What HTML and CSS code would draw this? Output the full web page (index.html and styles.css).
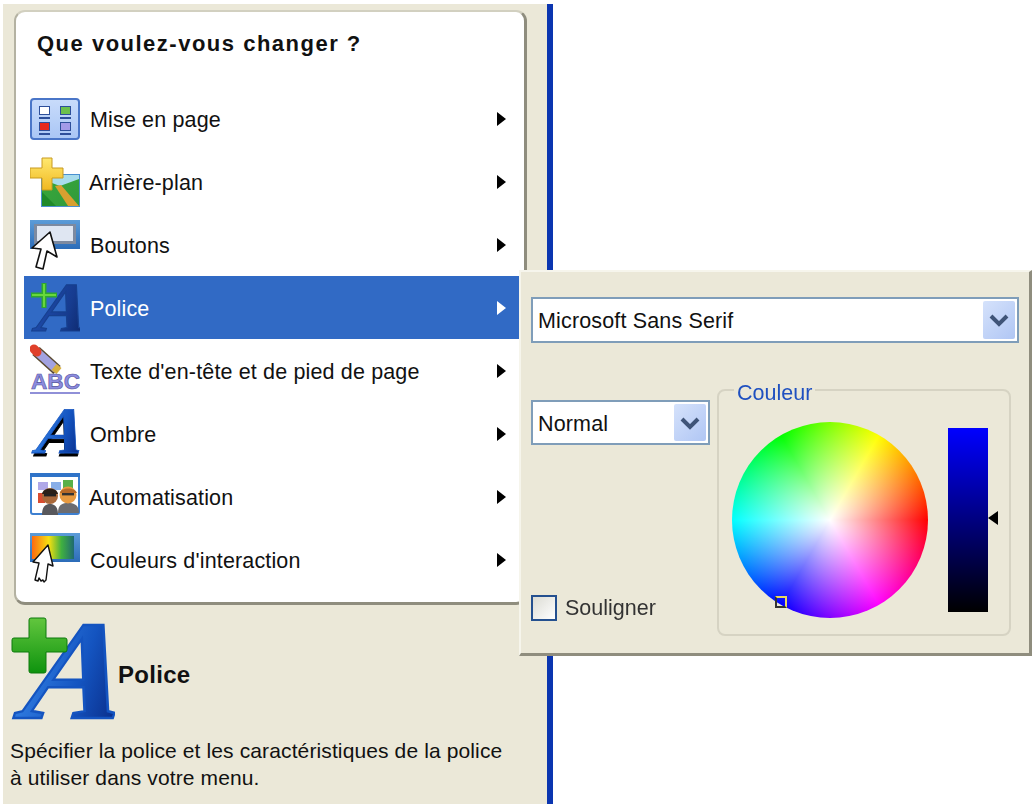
FILE: index.html
```html
<!DOCTYPE html>
<html lang="fr">
<head>
<meta charset="utf-8">
<title>Que voulez-vous changer ?</title>
<link rel="stylesheet" href="styles.css">
</head>
<body>
<svg class="defs" width="0" height="0" aria-hidden="true">
  <defs>
    <linearGradient id="aBlue" x1="0" y1="0" x2="1" y2="0">
      <stop offset="0" stop-color="#2f7be0"/><stop offset=".55" stop-color="#1454c0"/><stop offset="1" stop-color="#0a2f8c"/>
    </linearGradient>
    <linearGradient id="aDark" x1="0" y1="0" x2="1" y2="0">
      <stop offset="0" stop-color="#1d4aa8"/><stop offset=".6" stop-color="#173c90"/><stop offset="1" stop-color="#0e2a70"/>
    </linearGradient>
    <linearGradient id="plusGreen" x1="0" y1="0" x2="0" y2="1">
      <stop offset="0" stop-color="#62c63e"/><stop offset="1" stop-color="#0e930e"/>
    </linearGradient>
    <linearGradient id="plusYellow" x1="0" y1="0" x2="0" y2="1">
      <stop offset="0" stop-color="#ffe870"/><stop offset="1" stop-color="#f0b820"/>
    </linearGradient>
    <linearGradient id="sky" x1="0" y1="0" x2="1" y2="0">
      <stop offset="0" stop-color="#ff6a10"/><stop offset=".4" stop-color="#f6e010"/><stop offset=".7" stop-color="#40b040"/><stop offset="1" stop-color="#1f6a70"/>
    </linearGradient>
    <linearGradient id="panelBlue" x1="0" y1="0" x2="0" y2="1">
      <stop offset="0" stop-color="#c9dcfb"/><stop offset="1" stop-color="#a9c6f5"/>
    </linearGradient>
    <linearGradient id="btnBlue" x1="0" y1="0" x2="0" y2="1">
      <stop offset="0" stop-color="#5c9cd8"/><stop offset="1" stop-color="#2c6cb8"/>
    </linearGradient>
    <linearGradient id="land" x1="0" y1="0" x2="1" y2="1">
      <stop offset="0" stop-color="#3aa83a"/><stop offset="1" stop-color="#2f9a3c"/>
    </linearGradient>
  </defs>
</svg>
<div class="page">
  <div class="panel">
    <section class="card">
      <h1 class="card-title">Que voulez-vous changer ?</h1>
      <ul class="menu">
        <li class="item">
          <svg class="icon" viewBox="0 0 50 63">
            <rect x="1" y="12" width="48" height="40" rx="3" fill="url(#panelBlue)" stroke="#4a76c8" stroke-width="2"/>
            <rect x="9.5" y="19.5" width="10" height="8" fill="#fff" stroke="#2d4f9a"/>
            <rect x="30.5" y="19.5" width="10" height="8" fill="#6cc04c" stroke="#2d4f9a"/>
            <rect x="9" y="30" width="11" height="2" fill="#2d4f9a"/>
            <rect x="30" y="30" width="11" height="2" fill="#2d4f9a"/>
            <rect x="9.5" y="35.5" width="10" height="8" fill="#e8281c" stroke="#2d4f9a"/>
            <rect x="30.5" y="35.5" width="10" height="8" fill="#a39ae8" stroke="#2d4f9a"/>
            <rect x="9" y="46" width="11" height="2" fill="#2d4f9a"/>
            <rect x="30" y="46" width="11" height="2" fill="#2d4f9a"/>
          </svg>
          <span class="label">Mise en page</span><i class="caret"></i>
        </li>
        <li class="item">
          <svg class="icon" viewBox="0 0 50 63">
            <rect x="11.5" y="24.5" width="38" height="32" fill="url(#land)" stroke="#4a90d0"/>
            <path d="M22 25h27v4L30 36l-8-3z" fill="#a8dcec"/>
            <path d="M25 36l6-1 18 21H38z" fill="#d8a030"/>
            <path d="M12 42l14 14H12z" fill="#1f8a2a"/>
            <path d="M12 8h10v10h11v10H22v12H12V28H0V18h12z" fill="url(#plusYellow)" stroke="#c89a20" stroke-linejoin="round"/>
          </svg>
          <span class="label label-tight">Arrière-plan</span><i class="caret"></i>
        </li>
        <li class="item">
          <svg class="icon" viewBox="0 0 50 63">
            <rect x="0" y="7" width="50" height="29" fill="url(#btnBlue)"/>
            <rect x="4" y="11" width="42" height="20" fill="#7d8aa0"/>
            <rect x="7" y="13" width="36" height="15" fill="#dfe6f2"/>
            <path d="M20 19L2 35l9 1-5 18 7 2 4-18 10 6z" fill="#fff" stroke="#111" stroke-width="1.6" stroke-linejoin="round"/>
          </svg>
          <span class="label">Boutons</span><i class="caret"></i>
        </li>
        <li class="item active">
          <svg class="icon" viewBox="0 0 50 63">
            <text class="glyph-a" transform="translate(1 55) skewX(-18)" font-size="70" fill="url(#aDark)" stroke="#17408f" stroke-width="1.2">A</text>
            <path d="M14 7v25M1 19h26" stroke="#2fa82f" stroke-width="5"/>
            <path d="M14 8v23M2 19h24" stroke="#68d83c" stroke-width="2"/>
          </svg>
          <span class="label">Police</span><i class="caret"></i>
        </li>
        <li class="item">
          <svg class="icon" viewBox="0 0 50 63">
            <path d="M6 12l21 19" stroke="#5a4a30" stroke-width="11"/>
            <path d="M6 12l20 18" stroke="#a2a2e0" stroke-width="8"/>
            <path d="M4 10l3 3" stroke="#e0402a" stroke-width="9" stroke-linecap="round"/>
            <path d="M24 28l5 4" stroke="#d8b040" stroke-width="8"/>
            <text class="abc" x="1" y="50" font-size="22" textLength="49" lengthAdjust="spacingAndGlyphs">ABC</text>
            <rect x="0" y="53" width="50" height="2" fill="#9090d8"/>
          </svg>
          <span class="label">Texte d'en-tête et de pied de page</span><i class="caret"></i>
        </li>
        <li class="item">
          <svg class="icon" viewBox="0 0 50 63">
            <text class="glyph-a" transform="translate(3 54) skewX(-18)" font-size="62" fill="#000" stroke="#000">A</text>
            <text class="glyph-a" transform="translate(1 51) skewX(-18)" font-size="66" fill="url(#aBlue)" stroke="#1454c0" stroke-width=".8">A</text>
          </svg>
          <span class="label">Ombre</span><i class="caret"></i>
        </li>
        <li class="item">
          <svg class="icon" viewBox="0 0 50 63">
            <rect x="1" y="9" width="48" height="40" rx="2" fill="#fff" stroke="#3d7fd0" stroke-width="2"/>
            <rect x="0" y="8" width="50" height="4" fill="#2f73c8"/>
            <rect x="8" y="17" width="10" height="8" fill="#b0a8e8"/>
            <rect x="21" y="17" width="10" height="8" fill="#88aee8"/>
            <rect x="33" y="15" width="10" height="8" fill="#58b048"/>
            <rect x="8" y="28" width="7" height="10" fill="#d84c30"/>
            <path d="M12 50c0-9 4-11 8-11s8 2 8 11z" fill="#58585c"/>
            <path d="M28 48c0-8 4-10 10-10s11 2 11 10z" fill="#6c6c70"/>
            <circle cx="20" cy="31" r="8" fill="#a8683a"/>
            <path d="M12 29c1-7 15-7 16 0z" fill="#2a2018"/>
            <circle cx="38" cy="30" r="8.5" fill="#e89a40"/>
            <path d="M30 28c1-6 15-6 17 0z" fill="#b86a28"/>
            <rect x="14" y="29" width="12" height="2.4" fill="#222"/>
            <rect x="32" y="28" width="12" height="2.4" fill="#333"/>
          </svg>
          <span class="label label-tight">Automatisation</span><i class="caret"></i>
        </li>
        <li class="item">
          <svg class="icon" viewBox="0 0 50 63">
            <rect x="0" y="5" width="50" height="29" fill="url(#btnBlue)"/>
            <rect x="2" y="8" width="42" height="23" fill="url(#sky)"/>
            <path d="M18 17L3 34l6 1-4 17 3 1 1-3 2 3 2-1 1 2 2-2 2-16 5 2z" fill="#fff" stroke="#111" stroke-width="1.4" stroke-linejoin="round"/>
          </svg>
          <span class="label">Couleurs d'interaction</span><i class="caret"></i>
        </li>
      </ul>
    </section>
    <div class="info-head">
      <svg class="info-icon" viewBox="0 0 104 110">
        <text class="glyph-a" transform="translate(1 103) skewX(-18)" font-size="141" fill="url(#aBlue)" stroke="#1454c0" stroke-width="2.5">A</text>
        <path d="M20 3h13a2 2 0 0 1 2 2v18h19a2 2 0 0 1 2 2v10a2 2 0 0 1-2 2H35v19a2 2 0 0 1-2 2H20a2 2 0 0 1-2-2V37H3a2 2 0 0 1-2-2V25a2 2 0 0 1 2-2h15V5a2 2 0 0 1 2-2z" fill="url(#plusGreen)" stroke="#0c7a0c" stroke-width="1"/>
      </svg>
      <strong class="info-title">Police</strong>
    </div>
    <p class="info-text">Spécifier la police et les caractéristiques de la police<br>à utiliser dans votre menu.</p>
  </div>

  <aside class="flyout">
    <div class="combo combo-wide">
      <span class="combo-value">Microsoft Sans Serif</span>
      <span class="combo-btn"><svg viewBox="0 0 20 14" width="20" height="14"><path d="M2 3l8 8 8-8" fill="none" stroke="#3f5478" stroke-width="4"/></svg></span>
    </div>
    <div class="flyout-row">
      <div class="flyout-left">
        <div class="combo combo-narrow">
          <span class="combo-value">Normal</span>
          <span class="combo-btn"><svg viewBox="0 0 20 14" width="20" height="14"><path d="M2 3l8 8 8-8" fill="none" stroke="#3f5478" stroke-width="4"/></svg></span>
        </div>
        <label class="check"><span class="check-box"></span><span>Souligner</span></label>
      </div>
      <div class="group">
        <span class="group-legend">Couleur</span>
        <div class="wheel"><span class="wheel-mark"></span></div>
        <div class="bar"><i class="bar-arrow"></i></div>
      </div>
    </div>
  </aside>
</div>
</body>
</html>
```
FILE: styles.css
```css
* { box-sizing: border-box; }
html, body { margin: 0; padding: 0; background: #fff; }
body { width: 1034px; height: 810px; overflow: hidden; font-family: "Liberation Sans", Arial, sans-serif; color: #111; font-size: 21.5px; }
.defs { position: absolute; }
.page { position: relative; width: 1034px; height: 810px; padding: 4px 0 0 3px; filter: blur(.4px); }

.panel { width: 550px; height: 800px; background: #ebe8d8; border-right: 6px solid #0b35b0; padding: 6px 20px 0 11px; }
.card { height: 595px; background: #fff; border: 2px solid #b4b2a2; border-top-color: #d2d0c0; border-right: 3px solid #8f8d7e; border-bottom: 3px solid #8f8d7e; border-radius: 11px; padding: 0 5px 0 8px; }
.card-title { margin: 0; height: 75px; padding: 20px 0 0 13px; font-size: 22px; line-height: 24px; font-weight: bold; letter-spacing: 1.5px; }
.menu { list-style: none; margin: 0; padding: 0; }
.item { display: flex; align-items: center; height: 63px; padding: 0 13px 0 6px; }
.icon { width: 50px; height: 63px; flex: none; }
.label { flex: 1; margin-left: 10px; padding-top: 3px; letter-spacing: .15px; }
.label-tight { margin-left: 9px; }
.caret { width: 0; height: 0; border-left: 9px solid #000; border-top: 7px solid transparent; border-bottom: 7px solid transparent; }
.item.active { background: #316ac5; color: #fff; }
.item.active .caret { border-left-color: #fff; }
.glyph-a { font-family: "Liberation Serif", serif; font-weight: bold; }
.abc { font-family: "Liberation Sans", sans-serif; font-weight: bold; fill: #8c8ce0; stroke: #55559c; stroke-width: .6; }

.info-head { display: flex; align-items: center; height: 110px; margin-top: 10px; margin-left: -3px; }
.info-icon { width: 104px; height: 110px; flex: none; }
.info-title { margin-left: 3px; padding-top: 10px; font-size: 24px; letter-spacing: .3px; }
.info-text { margin: 12px 0 0 -4px; font-size: 21px; line-height: 27px; white-space: nowrap; letter-spacing: .12px; }

.flyout { position: absolute; left: 519px; top: 270px; width: 513px; height: 386px; background: #ebe8d8; border: 2px solid #f6f5ec; border-right: 3px solid #8f8d7e; border-bottom: 3px solid #8f8d7e; padding: 25px 0 0 10px; }
.combo { display: flex; align-items: center; background: #fff; border: 2px solid #7f9db9; padding: 2px; }
.combo-wide { width: 488px; height: 46px; }
.combo-narrow { width: 179px; height: 45px; }
.combo-value { flex: 1; padding: 3px 0 0 3px; letter-spacing: .15px; }
.combo-btn { width: 32px; height: 100%; display: flex; align-items: center; justify-content: center; background: linear-gradient(135deg, #d5e2fb, #b0c6f4); border-radius: 2px; }
.flyout-row { display: flex; gap: 7px; margin-top: 46px; }
.flyout-left { width: 179px; height: 247px; padding: 11px 0 15px; display: flex; flex-direction: column; justify-content: space-between; }
.check { display: flex; align-items: center; gap: 8px; color: #333; }
.check-box { width: 26px; height: 26px; border: 2px solid #24508f; background: linear-gradient(135deg, #dcdcd4, #fff); }
.group { position: relative; width: 294px; height: 247px; border: 2px solid #d6d3c3; border-radius: 8px; }
.group-legend { position: absolute; left: 15px; top: -9px; padding: 0 3px; background: #ebe8d8; color: #1f50c0; line-height: 22px; }
.wheel { position: absolute; left: 13px; top: 31px; width: 196px; height: 196px; border-radius: 50%; background: radial-gradient(circle closest-side, #fff 0, rgba(255,255,255,0) 100%), conic-gradient(from 30deg, #ff0 0deg, #f00 60deg, #f0f 120deg, #00f 180deg, #0ff 240deg, #0f0 300deg, #ff0 360deg); }
.wheel-mark { position: absolute; left: 43px; top: 174px; width: 12px; height: 12px; border: 2px solid #e8d860; border-left-color: #333; border-bottom-color: #333; }
.bar { position: absolute; left: 229px; top: 37px; width: 40px; height: 184px; background: linear-gradient(#0000ff, #000); }
.bar-arrow { position: absolute; left: 40px; top: 83px; width: 0; height: 0; border-right: 10px solid #000; border-top: 7px solid transparent; border-bottom: 7px solid transparent; }
```
